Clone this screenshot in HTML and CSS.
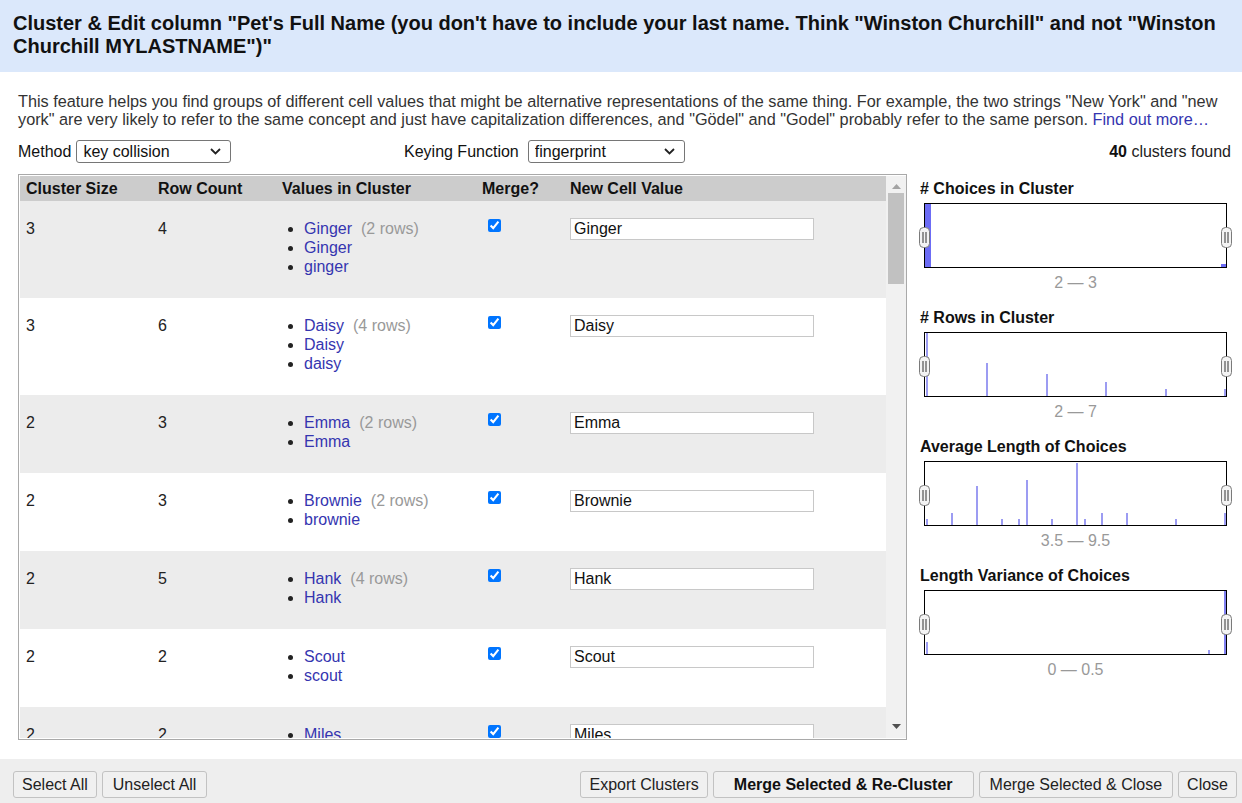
FILE: index.html
```html
<!DOCTYPE html>
<html>
<head>
<meta charset="utf-8">
<link rel="stylesheet" href="styles.css">
</head>
<body>
<div class="page">
  <header class="dlg-head">
    <h1>Cluster &amp; Edit column "Pet's Full Name (you don't have to include your last name. Think "Winston Churchill" and not "Winston Churchill MYLASTNAME")"</h1>
  </header>
  <p class="desc">This feature helps you find groups of different cell values that might be alternative representations of the same thing. For example, the two strings "New York" and "new york" are very likely to refer to the same concept and just have capitalization differences, and "Gödel" and "Godel" probably refer to the same person. <a class="link">Find out more…</a></p>

  <div class="controls">
    <div class="ctl">
      <span>Method</span>
      <span class="sel sel-method">
        <select><option>key collision</option></select>
        <svg class="chev" width="11" height="7" viewBox="0 0 11 7"><path d="M1 1 L5.5 5.5 L10 1" fill="none" stroke="#222" stroke-width="1.8"/></svg>
      </span>
    </div>
    <div class="ctl">
      <span>Keying Function</span>
      <span class="sel sel-key">
        <select><option>fingerprint</option></select>
        <svg class="chev" width="11" height="7" viewBox="0 0 11 7"><path d="M1 1 L5.5 5.5 L10 1" fill="none" stroke="#222" stroke-width="1.8"/></svg>
      </span>
    </div>
    <div class="found"><b>40</b> clusters found</div>
  </div>

  <div class="main">
    <div class="table-box">
      <div class="scroll">
        <table class="clusters">
          <colgroup><col class="c1"><col class="c2"><col class="c3"><col class="c4"><col class="c5"></colgroup>
          <thead>
            <tr><th>Cluster Size</th><th>Row Count</th><th>Values in Cluster</th><th>Merge?</th><th>New Cell Value</th></tr>
          </thead>
          <tbody>
            <tr class="odd">
              <td>3</td><td>4</td>
              <td><ul><li><a>Ginger</a><span class="cnt">(2 rows)</span></li><li><a>Ginger</a></li><li><a>ginger</a></li></ul></td>
              <td><input type="checkbox" checked></td>
              <td><input class="val" type="text" value="Ginger"></td>
            </tr>
            <tr>
              <td>3</td><td>6</td>
              <td><ul><li><a>Daisy</a><span class="cnt">(4 rows)</span></li><li><a>Daisy</a></li><li><a>daisy</a></li></ul></td>
              <td><input type="checkbox" checked></td>
              <td><input class="val" type="text" value="Daisy"></td>
            </tr>
            <tr class="odd">
              <td>2</td><td>3</td>
              <td><ul><li><a>Emma</a><span class="cnt">(2 rows)</span></li><li><a>Emma</a></li></ul></td>
              <td><input type="checkbox" checked></td>
              <td><input class="val" type="text" value="Emma"></td>
            </tr>
            <tr>
              <td>2</td><td>3</td>
              <td><ul><li><a>Brownie</a><span class="cnt">(2 rows)</span></li><li><a>brownie</a></li></ul></td>
              <td><input type="checkbox" checked></td>
              <td><input class="val" type="text" value="Brownie"></td>
            </tr>
            <tr class="odd">
              <td>2</td><td>5</td>
              <td><ul><li><a>Hank</a><span class="cnt">(4 rows)</span></li><li><a>Hank</a></li></ul></td>
              <td><input type="checkbox" checked></td>
              <td><input class="val" type="text" value="Hank"></td>
            </tr>
            <tr>
              <td>2</td><td>2</td>
              <td><ul><li><a>Scout</a></li><li><a>scout</a></li></ul></td>
              <td><input type="checkbox" checked></td>
              <td><input class="val" type="text" value="Scout"></td>
            </tr>
            <tr class="odd">
              <td>2</td><td>2</td>
              <td><ul><li><a>Miles</a></li><li><a>miles</a></li></ul></td>
              <td><input type="checkbox" checked></td>
              <td><input class="val" type="text" value="Miles"></td>
            </tr>
            <tr>
              <td>2</td><td>2</td>
              <td><ul><li><a>Bella</a></li><li><a>bella</a></li></ul></td>
              <td><input type="checkbox" checked></td>
              <td><input class="val" type="text" value="Bella"></td>
            </tr>
          </tbody>
        </table>
      </div>
      <div class="vscroll">
        <svg class="arrow" width="9" height="5" viewBox="0 0 9 5"><path d="M0 5 L4.5 0 L9 5 Z" fill="#a3a3a3"/></svg>
        <div class="track"><div class="thumb"></div></div>
        <svg class="arrow" width="9" height="5" viewBox="0 0 9 5"><path d="M0 0 L4.5 5 L9 0 Z" fill="#505050"/></svg>
      </div>
    </div>

    <aside class="facets">
      <section class="facet">
        <h2># Choices in Cluster</h2>
        <div class="chart">
          <svg width="301" height="63" viewBox="0 0 301 63">
            <rect x="0" y="0" width="6" height="63" fill="#6c6cf5"/>
            <rect x="296" y="60" width="5" height="3" fill="#6c6cf5"/>
          </svg>
          <span class="handle h-left"><svg width="11" height="21" viewBox="0 0 11 21"><rect x="0.5" y="0.5" width="10" height="20" rx="4" fill="#f3f3f3" stroke="#7a7a7a"/><path d="M4 5 V16 M7 5 V16" stroke="#333" stroke-width="1"/></svg></span>
          <span class="handle h-right"><svg width="11" height="21" viewBox="0 0 11 21"><rect x="0.5" y="0.5" width="10" height="20" rx="4" fill="#f3f3f3" stroke="#7a7a7a"/><path d="M4 5 V16 M7 5 V16" stroke="#333" stroke-width="1"/></svg></span>
        </div>
        <div class="range">2 — 3</div>
      </section>

      <section class="facet">
        <h2># Rows in Cluster</h2>
        <div class="chart">
          <svg width="301" height="63" viewBox="0 0 301 63">
            <rect x="1" y="0" width="2" height="63" fill="#9c9cf2"/>
            <rect x="61" y="30" width="2" height="33" fill="#9c9cf2"/>
            <rect x="121" y="41" width="2" height="22" fill="#9c9cf2"/>
            <rect x="180" y="49" width="2" height="14" fill="#9c9cf2"/>
            <rect x="240" y="56" width="2" height="7" fill="#9c9cf2"/>
            <rect x="299" y="56" width="2" height="7" fill="#9c9cf2"/>
          </svg>
          <span class="handle h-left"><svg width="11" height="21" viewBox="0 0 11 21"><rect x="0.5" y="0.5" width="10" height="20" rx="4" fill="#f3f3f3" stroke="#7a7a7a"/><path d="M4 5 V16 M7 5 V16" stroke="#333" stroke-width="1"/></svg></span>
          <span class="handle h-right"><svg width="11" height="21" viewBox="0 0 11 21"><rect x="0.5" y="0.5" width="10" height="20" rx="4" fill="#f3f3f3" stroke="#7a7a7a"/><path d="M4 5 V16 M7 5 V16" stroke="#333" stroke-width="1"/></svg></span>
        </div>
        <div class="range">2 — 7</div>
      </section>

      <section class="facet">
        <h2>Average Length of Choices</h2>
        <div class="chart">
          <svg width="301" height="63" viewBox="0 0 301 63">
            <rect x="1" y="57" width="2" height="6" fill="#9c9cf2"/>
            <rect x="26" y="51" width="2" height="12" fill="#9c9cf2"/>
            <rect x="51" y="24" width="2" height="39" fill="#9c9cf2"/>
            <rect x="76" y="57" width="2" height="6" fill="#9c9cf2"/>
            <rect x="93" y="57" width="2" height="6" fill="#9c9cf2"/>
            <rect x="101" y="18" width="2" height="45" fill="#9c9cf2"/>
            <rect x="126" y="57" width="2" height="6" fill="#9c9cf2"/>
            <rect x="151" y="1" width="2" height="62" fill="#9c9cf2"/>
            <rect x="159" y="57" width="2" height="6" fill="#9c9cf2"/>
            <rect x="176" y="51" width="2" height="12" fill="#9c9cf2"/>
            <rect x="201" y="51" width="2" height="12" fill="#9c9cf2"/>
            <rect x="250" y="57" width="2" height="6" fill="#9c9cf2"/>
            <rect x="299" y="51" width="2" height="12" fill="#9c9cf2"/>
          </svg>
          <span class="handle h-left"><svg width="11" height="21" viewBox="0 0 11 21"><rect x="0.5" y="0.5" width="10" height="20" rx="4" fill="#f3f3f3" stroke="#7a7a7a"/><path d="M4 5 V16 M7 5 V16" stroke="#333" stroke-width="1"/></svg></span>
          <span class="handle h-right"><svg width="11" height="21" viewBox="0 0 11 21"><rect x="0.5" y="0.5" width="10" height="20" rx="4" fill="#f3f3f3" stroke="#7a7a7a"/><path d="M4 5 V16 M7 5 V16" stroke="#333" stroke-width="1"/></svg></span>
        </div>
        <div class="range">3.5 — 9.5</div>
      </section>

      <section class="facet">
        <h2>Length Variance of Choices</h2>
        <div class="chart">
          <svg width="301" height="63" viewBox="0 0 301 63">
            <rect x="1" y="51" width="2" height="12" fill="#9c9cf2"/>
            <rect x="283" y="59" width="2" height="4" fill="#9c9cf2"/>
            <rect x="299" y="0" width="2" height="63" fill="#8080f0"/>
          </svg>
          <span class="handle h-left"><svg width="11" height="21" viewBox="0 0 11 21"><rect x="0.5" y="0.5" width="10" height="20" rx="4" fill="#f3f3f3" stroke="#7a7a7a"/><path d="M4 5 V16 M7 5 V16" stroke="#333" stroke-width="1"/></svg></span>
          <span class="handle h-right"><svg width="11" height="21" viewBox="0 0 11 21"><rect x="0.5" y="0.5" width="10" height="20" rx="4" fill="#f3f3f3" stroke="#7a7a7a"/><path d="M4 5 V16 M7 5 V16" stroke="#333" stroke-width="1"/></svg></span>
        </div>
        <div class="range">0 — 0.5</div>
      </section>
    </aside>
  </div>

  <footer class="buttons">
    <div class="grp">
      <button class="btn narrow">Select All</button>
      <button class="btn">Unselect All</button>
    </div>
    <div class="grp">
      <button class="btn narrow">Export Clusters</button>
      <button class="btn primary">Merge Selected &amp; Re-Cluster</button>
      <button class="btn">Merge Selected &amp; Close</button>
      <button class="btn narrow">Close</button>
    </div>
  </footer>
</div>
</body>
</html>
```

FILE: styles.css
```css
* { box-sizing: border-box; }
html, body { margin: 0; padding: 0; background: #fff; }
body {
  font-family: "Liberation Sans", Arial, sans-serif;
  font-size: 16px;
  color: #111;
}
.page { width: 1242px; height: 803px; overflow: hidden; }

.dlg-head {
  background: #dbe8fb;
  height: 72px;
  padding: 12px 13px 0 13px;
}
.dlg-head h1 {
  margin: 0;
  font-size: 20px;
  line-height: 23px;
  font-weight: bold;
  color: #111;
}

.desc {
  margin: 20px 18px 0 18px;
  font-size: 16.25px;
  line-height: 18px;
  color: #333;
}
.link { color: #3535b0; cursor: pointer; }

.controls {
  display: grid;
  grid-template-columns: 386px 1fr auto;
  align-items: center;
  margin: 12px 11px 0 18px;
  height: 23px;
}
.ctl { display: flex; align-items: center; gap: 5px; }
.sel { position: relative; display: inline-block; }
.sel select {
  appearance: none;
  -webkit-appearance: none;
  font-family: "Liberation Sans", Arial, sans-serif;
  font-size: 16px;
  color: #111;
  height: 23px;
  padding: 0 0 0 6px;
  border: 1px solid #767676;
  border-radius: 3px;
  background: #fff;
}
.sel-method select { width: 155px; }
.sel-key { margin-left: 4px; }
.sel-key select { width: 157px; }
.chev { position: absolute; right: 10px; top: 8px; pointer-events: none; }
.found { color: #222; }
.found b { color: #111; }

.main { display: flex; margin: 11px 0 0 18px; }

.table-box {
  display: flex;
  width: 889px;
  height: 566px;
  border: 1px solid #a9a9a9;
  padding: 1px 0 1px 1px;
}
.scroll { flex: 1; overflow: hidden; }
.vscroll {
  width: 20px;
  background: #f1f1f1;
  display: flex;
  flex-direction: column;
  align-items: center;
}
.vscroll .arrow { margin: 8px 0 4px; flex: none; }
.vscroll .arrow:last-child { margin: 4px 0 9px; }
.track { flex: 1; width: 100%; padding: 0 2px; }
.thumb { height: 91px; background: #c1c1c1; }

.clusters {
  border-collapse: collapse;
  table-layout: fixed;
  width: 100%;
}
.c1 { width: 132px; }
.c2 { width: 124px; }
.c3 { width: 200px; }
.c4 { width: 88px; }
.clusters th {
  background: #cccccc;
  text-align: left;
  font-weight: bold;
  height: 25px;
  padding: 0 6px;
  line-height: 19px;
  color: #111;
}
.clusters td {
  vertical-align: top;
  padding: 18px 6px 22px 6px;
  line-height: 19px;
  color: #222;
}
.clusters tr.odd td { background: #ececec; }
.clusters ul { margin: 0; padding: 0 0 0 22px; }
.clusters li a { color: #3535b0; }
.cnt { color: #999; margin-left: 9px; }
.clusters input[type=checkbox] {
  display: block;
  margin: 0 0 0 6px;
  width: 13px;
  height: 13px;
}
.val {
  display: block;
  margin-top: -1px;
  width: 244px;
  height: 22px;
  border: 1px solid #c8c8c8;
  padding: 0 3px;
  font-family: "Liberation Sans", Arial, sans-serif;
  font-size: 16px;
  color: #111;
  background: #fff;
}

.facets { margin-left: 13px; padding-top: 5px; width: 311px; }
.facet { margin-bottom: 15px; }
.facet h2 {
  margin: 0 0 4px 0;
  font-size: 16px;
  line-height: 20px;
  font-weight: bold;
  color: #111;
}
.chart {
  position: relative;
  margin-left: 4px;
  width: 303px;
  height: 65px;
  border: 1px solid #000;
  background: #fff;
}
.chart > svg { display: block; }
.handle { position: absolute; top: 23px; line-height: 0; }
.handle svg { display: block; }
.h-left { left: -6px; }
.h-right { right: -6px; }
.range {
  margin-top: 5px;
  margin-left: 4px;
  width: 303px;
  text-align: center;
  color: #999;
  line-height: 20px;
}

.buttons {
  margin-top: 19px;
  height: 44px;
  background: #eeeeee;
  display: flex;
  justify-content: space-between;
  padding: 12px 5px 0 13px;
}
.grp { display: flex; gap: 5px; }
.btn {
  height: 27px;
  padding: 0 10px;
  font-family: "Liberation Sans", Arial, sans-serif;
  font-size: 16px;
  color: #222;
  background: #f0f0f0;
  border: 1px solid #c2c2c2;
  border-radius: 3px;
}
.btn.narrow { padding: 0 8px; }
.btn.primary { font-weight: bold; padding: 0 20px; color: #111; }
```
